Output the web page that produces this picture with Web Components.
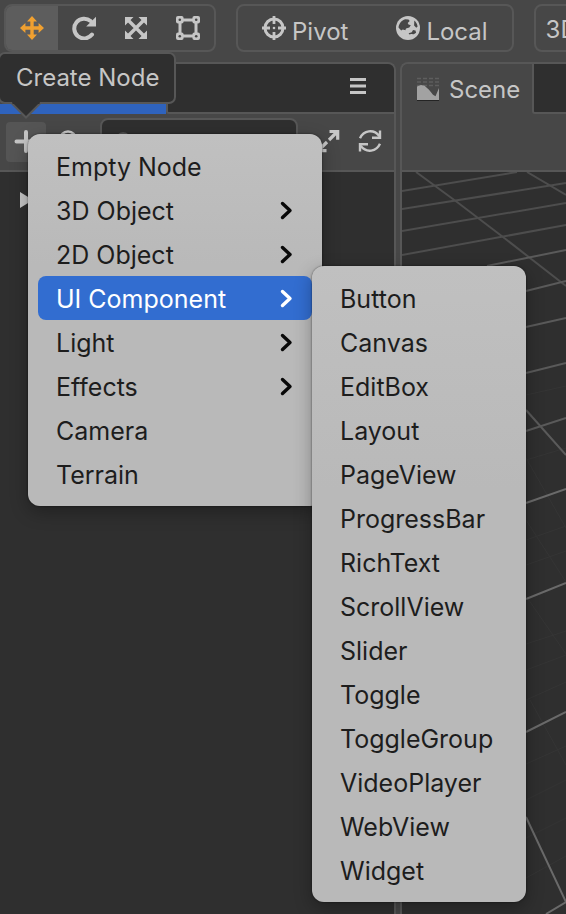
<!DOCTYPE html>
<html lang="en">
<head>
<meta charset="utf-8">
<title>Scene Editor</title>
<style>
  html, body { height: 100%; margin: 0; }
  body { background: #474747; font-family: Inter, "Liberation Sans", sans-serif; font-size: 24px; color: #c6c6c6; overflow: hidden; }
</style>
</head>
<body>
<editor-app></editor-app>

<script>
const define = (name, html) => {
  const template = document.createElement('template');
  template.innerHTML = html;
  customElements.define(name, class extends HTMLElement {
    constructor() {
      super();
      this.attachShadow({ mode: 'open' }).append(template.content.cloneNode(true));
    }
  });
};

const icons = {
  move: '<path d="M12 0l5 5.400h-3.300v4.900h4.900V7L24 12l-5.400 5v-3.300h-4.900v4.900H17L12 24l-5-5.400h3.300v-4.900H5.400V17L0 12l5.400-5v3.300h4.900V5.400H7z" fill="currentColor"/>',
  rotate: '<path d="M20 18.600A9.900 9.900 0 1 1 18.600 5" fill="none" stroke="currentColor" stroke-width="4" stroke-linecap="round"/><path d="M24 .8v9.800h-9.800z" fill="currentColor"/>',
  scale: '<path d="M4 4l16 16M20 4L4 20" stroke="currentColor" stroke-width="3.400"/><path d="M1 1h8.500L1 9.500zM23 1v8.500L14.500 1zM1 23v-8.500L9.500 23zM23 23h-8.500l8.500-8.500z" fill="currentColor"/>',
  rect: '<path d="M4 4h16v16H4z" fill="none" stroke="currentColor" stroke-width="3"/><g fill="currentColor"><rect x="0" y="0" width="7.600" height="7.600" rx="2"/><rect x="16.400" y="0" width="7.600" height="7.600" rx="2"/><rect x="0" y="16.400" width="7.600" height="7.600" rx="2"/><rect x="16.400" y="16.400" width="7.600" height="7.600" rx="2"/></g><g fill="#474747"><circle cx="3.800" cy="3.800" r="1.300"/><circle cx="20.200" cy="3.800" r="1.300"/><circle cx="3.800" cy="20.200" r="1.300"/><circle cx="20.200" cy="20.200" r="1.300"/></g>',
  pivot: '<circle cx="12" cy="12" r="9" fill="none" stroke="currentColor" stroke-width="3"/><path d="M12 0v8M12 16v8M0 12h8M16 12h8" stroke="currentColor" stroke-width="2.800"/><circle cx="12" cy="12" r="1.300" fill="currentColor"/>',
  globe: '<circle cx="12" cy="12" r="12" fill="currentColor"/><path d="M2.500 11.500C3 7.500 5.500 4.200 9.200 3.200l3.300.2 1.200 1.600-2 2 .8 1.500 2.300.8-1.500 2.300-3.300 1-.6 1.600-2.600-.6-1.600.8zM18.300 4.500c1.800 1.600 3 3.600 3.300 6l-1.300 1.200-2.200-2.200zM12.600 17.200l3.200-.9 1.200-2.200 2.500.4.6 2.200-2.300 1.600-2.700-.4-1.700.5z" fill="#474747"/>',
  menu: '<path d="M4 5.500h16M4 12h16M4 18.500h16" stroke="currentColor" stroke-width="3"/>',
  plus: '<path d="M12 2v19M2.500 11.500h19" stroke="currentColor" stroke-width="4" stroke-linecap="round"/>',
  search: '<circle cx="11" cy="9.500" r="8" fill="none" stroke="currentColor" stroke-width="2.600"/><path d="M17 15.500l6 6" stroke="currentColor" stroke-width="3"/>',
  expand: '<path d="M13 10l8-8M13.500 1.500h8.200v8.200M11 12l-8 8M2.300 12.500v8.200h8.200" fill="none" stroke="currentColor" stroke-width="3.200"/>',
  refresh: '<path d="M2 8.200C5.500.5 15.500-1.500 21.400 6.200M22 13.800C18.500 21.500 8.500 23.500 2.600 15.800" fill="none" stroke="currentColor" stroke-width="2.400"/><path d="M22 .5v7.300h-8M2 21.500v-7.300h8" fill="none" stroke="currentColor" stroke-width="2.400"/>',
  chevron: '<path d="M8.500 4.500l7.500 7-7.500 7" fill="none" stroke="currentColor" stroke-width="3.400" stroke-linecap="round" stroke-linejoin="round"/>',
  triangle: '<path d="M3 4l13 8-13 8z" fill="currentColor"/>',
  terrain: '<path d="M1 1.500h22M1 5h22M1 8.500h22" stroke="#5e5e5e" stroke-width="1.500" stroke-dasharray="4 2"/><path d="M1 23V9.500l4-1.500 3.500.8 4.500 4 4 5 2.500 1.500L23 11v12z" fill="#a2a2a2"/><path d="M1 23.500h22" stroke="#242424" stroke-width="1"/>'
};
customElements.define('ui-icon', class extends HTMLElement {
  connectedCallback() {
    if (this.shadowRoot) return;
    this.attachShadow({ mode: 'open' }).innerHTML =
      `<style>:host{display:block;flex:none;width:24px;height:24px}svg{display:block;width:100%;height:100%}</style>
       <svg viewBox="0 0 24 24" aria-hidden="true">${icons[this.getAttribute('name')]}</svg>`;
  }
});

define('tool-group', `
<style>
  :host { display: flex; flex: none; box-sizing: border-box; height: 48px; border: 2px solid #575757; border-radius: 8px; overflow: hidden; }
</style><slot></slot>`);

define('tool-button', `
<style>
  :host { display: flex; }
  button { display: flex; align-items: center; gap: 6px; min-width: 52px; padding: 0 14px; border: 0; background: none; font: inherit; color: inherit; }
  :host([active]) button { background: #5d5d5d; color: #f0a030; }
  :host([wide]) button { padding: 0 24px; }
  :host([text]) button { padding: 0 10px; }
  .label { padding-top: 6px; }
  :host([text]) .label { padding-top: 2px; }
  :host([plain]) .label { display: none; }
</style>
<button type="button"><slot name="icon"></slot><span class="label"><slot></slot></span></button>`);

define('dock-panel', `
<style>
  :host { display: flex; flex-direction: column; box-sizing: border-box; min-width: 0; border: 2px solid #575757; border-bottom: 0; border-radius: 8px 8px 0 0; overflow: hidden; }
  header { display: flex; flex: none; height: 50px; }
  .tab { display: flex; align-items: center; box-sizing: border-box; background: #474747; }
  .rest { flex: 1; display: flex; align-items: center; justify-content: flex-end; box-sizing: border-box; padding: 0 24px 4px; background: #2f2f2f; border: solid #575757; border-width: 0 0 2px 2px; border-bottom-left-radius: 3px; }
  .bar { display: flex; align-items: center; flex: none; box-sizing: border-box; height: 58px; border-bottom: 2px solid #575757; }
  .body { flex: 1; min-height: 0; background: #2f2f2f; }
</style>
<header><div class="tab"><slot name="tab"></slot></div><div class="rest"><slot name="actions"></slot></div></header>
<div class="bar"><slot name="bar"></slot></div>
<div class="body"><slot></slot></div>`);

define('search-field', `
<style>
  :host { display: flex; flex: 1; min-width: 0; }
  label { display: flex; align-items: center; flex: 1; min-width: 0; box-sizing: border-box; height: 48px; padding: 0 12px; gap: 8px; border: 2px solid #575757; border-radius: 8px; background: #2f2f2f; color: #5c5c5c; }
  ui-icon { width: 20px; height: 20px; }
  input { flex: 1; min-width: 0; border: 0; padding: 0; background: none; font: inherit; font-size: 20px; color: #c6c6c6; }
  input::placeholder { color: #5c5c5c; opacity: 1; }
</style>
<label><ui-icon name="search"></ui-icon><input type="text" placeholder="Search" aria-label="Search nodes"></label>`);

define('hierarchy-bar', `
<style>
  :host { display: flex; align-items: center; flex: 1; min-width: 0; padding: 0 4px 0 6px; }
  button { display: flex; align-items: center; justify-content: center; width: 40px; height: 40px; flex: none; padding: 0; border: 0; border-radius: 4px; background: none; color: inherit; }
  .add { background: #555; }
  .find { width: 46px; margin-right: 8px; }
  .expand { margin: 0 2px 0 10px; }
</style>
<button class="add" type="button" aria-label="Create node"><ui-icon name="plus"></ui-icon></button>
<button class="find" type="button" aria-label="Search type"><ui-icon name="search"></ui-icon></button>
<search-field></search-field>
<button class="expand" type="button" aria-label="Expand all"><ui-icon name="expand"></ui-icon></button>
<button type="button" aria-label="Refresh"><ui-icon name="refresh"></ui-icon></button>`);

define('scene-grid', `
<style>
  :host { display: block; height: 100%; }
  svg { display: block; width: 100%; height: 100%; }
</style>
<svg viewBox="402 172 164 742" preserveAspectRatio="xMinYMin slice" fill="none" aria-hidden="true">
  <path stroke="#353535" d="M526 458l40 70M526 520l40 62M526 596l40 58M530 700l36 65M526 644l40-13M526 670l40-15M526 700l40-18M526 764l40-18M526 800l40-20M526 838l40-20M526 878l40-22M526 540l40-14M526 565l40-14M526 460l40-12M526 395l40-9"/>
  <g stroke="#4d4d4d" stroke-width="2">
    <path d="M402 191L517 172M402 209L566 183M402 231L566 203M402 255L566 225"/>
    <path d="M416 172L457 202L503 237L566 286M527 172L566 195"/>
  </g>
  <g stroke="#5a5a5a" stroke-width="2">
    <path d="M487 266L566 250M526 291L566 281M526 327L566 318M526 373L566 363M526 431L566 418M526 410L566 455"/>
  </g>
  <g stroke="#6a6a6a" stroke-width="2">
    <path d="M526 503L566 489M526 599L566 583M526 732L566 712M546 914L566 902M526 817L566 902"/>
  </g>
</svg>`);

define('tool-tip', `
<style>
  :host { display: block; box-sizing: border-box; padding: 10px 15px 10px 16px; border: 2px solid #575757; border-radius: 7px; background: #2f2f2f; line-height: 28px; white-space: nowrap; }
  svg { position: absolute; left: 10px; top: 100%; width: 32px; height: 18px; }
</style>
<slot></slot><svg viewBox="0 0 32 18" aria-hidden="true"><path d="M1 0L16 15L31 0" fill="#2f2f2f"/><path d="M0 1H1.500L16 15.500L30.500 1H32" fill="none" stroke="#575757" stroke-width="2"/><path d="M2.500 1h27" stroke="#2f2f2f" stroke-width="2"/></svg>`);

define('context-menu', `
<style>
  :host { display: block; box-sizing: border-box; padding: 10px; border-radius: 12px; background: linear-gradient(#c0c0c0, #b9b9b9 35%); box-shadow: 0 0 2px rgba(0,0,0,.6), 0 6px 18px rgba(0,0,0,.3); color: #1d1d1d; font-size: 25px; }
</style><div role="menu"><slot></slot></div>`);

define('menu-item', `
<style>
  :host { display: block; }
  button { display: flex; align-items: center; justify-content: space-between; box-sizing: border-box; width: 100%; height: 44px; padding: 2px 14px 0 18px; border: 0; border-radius: 8px; background: none; font: inherit; color: inherit; text-align: left; white-space: nowrap; }
  :host([selected]) button { background: #326dd0; color: #fff; }
  ui-icon { display: none; color: #080808; }
  :host([submenu]) ui-icon { display: block; }
  :host([selected]) ui-icon { color: #fff; }
</style>
<button type="button" role="menuitem"><slot></slot><ui-icon name="chevron"></ui-icon></button>`);

define('editor-app', `
<style>
  :host { display: grid; grid-template-rows: 62px 1fr; height: 100vh; position: relative; overflow: hidden; }
  nav { display: flex; align-items: flex-start; gap: 20px; padding: 4px 0 0 4px; min-width: 0; }
  main { display: grid; grid-template-columns: 396px 1fr; gap: 4px; min-height: 0; }
  .left { border-left: 0; border-top-left-radius: 0; }
  .right { border-right: 0; border-top-right-radius: 0; }
  .current { width: 166px; height: 100%; box-sizing: border-box; border-bottom: 10px solid #2f63bd; background: #474747; }
  .menu-button { display: flex; padding: 0; border: 0; background: none; color: inherit; }
  .tree { padding: 16px 17px; }
  .scene-tab { display: flex; align-items: center; gap: 9px; padding: 0 12px 0 14px; }
  tool-tip { position: absolute; left: -2px; top: 52px; }
  .create { position: absolute; left: 28px; top: 134px; width: 294px; }
  .components { position: absolute; left: 312px; top: 266px; width: 214px; }
</style>
<nav aria-label="Tools">
  <tool-group>
    <tool-button plain active><ui-icon slot="icon" name="move"></ui-icon></tool-button>
    <tool-button plain><ui-icon slot="icon" name="rotate"></ui-icon></tool-button>
    <tool-button plain><ui-icon slot="icon" name="scale"></ui-icon></tool-button>
    <tool-button plain><ui-icon slot="icon" name="rect"></ui-icon></tool-button>
  </tool-group>
  <tool-group>
    <tool-button wide><ui-icon slot="icon" name="pivot"></ui-icon>Pivot</tool-button>
    <tool-button wide><ui-icon slot="icon" name="globe"></ui-icon>Local</tool-button>
  </tool-group>
  <tool-group><tool-button text>3D</tool-button></tool-group>
</nav>
<main>
  <dock-panel class="left">
    <div class="current" slot="tab"></div>
    <button class="menu-button" slot="actions" type="button" aria-label="Panel menu"><ui-icon name="menu"></ui-icon></button>
    <hierarchy-bar slot="bar"></hierarchy-bar>
    <div class="tree"><ui-icon name="triangle"></ui-icon></div>
  </dock-panel>
  <dock-panel class="right">
    <div class="scene-tab" slot="tab"><ui-icon name="terrain"></ui-icon><span>Scene</span></div>
    <scene-grid></scene-grid>
  </dock-panel>
</main>
<tool-tip role="tooltip">Create Node</tool-tip>
<context-menu class="create" aria-label="Create">
  <menu-item>Empty Node</menu-item>
  <menu-item submenu>3D Object</menu-item>
  <menu-item submenu>2D Object</menu-item>
  <menu-item submenu selected>UI Component</menu-item>
  <menu-item submenu>Light</menu-item>
  <menu-item submenu>Effects</menu-item>
  <menu-item>Camera</menu-item>
  <menu-item>Terrain</menu-item>
</context-menu>
<context-menu class="components" aria-label="UI Component">
  <menu-item>Button</menu-item>
  <menu-item>Canvas</menu-item>
  <menu-item>EditBox</menu-item>
  <menu-item>Layout</menu-item>
  <menu-item>PageView</menu-item>
  <menu-item>ProgressBar</menu-item>
  <menu-item>RichText</menu-item>
  <menu-item>ScrollView</menu-item>
  <menu-item>Slider</menu-item>
  <menu-item>Toggle</menu-item>
  <menu-item>ToggleGroup</menu-item>
  <menu-item>VideoPlayer</menu-item>
  <menu-item>WebView</menu-item>
  <menu-item>Widget</menu-item>
</context-menu>`);
</script>
</body>
</html>
